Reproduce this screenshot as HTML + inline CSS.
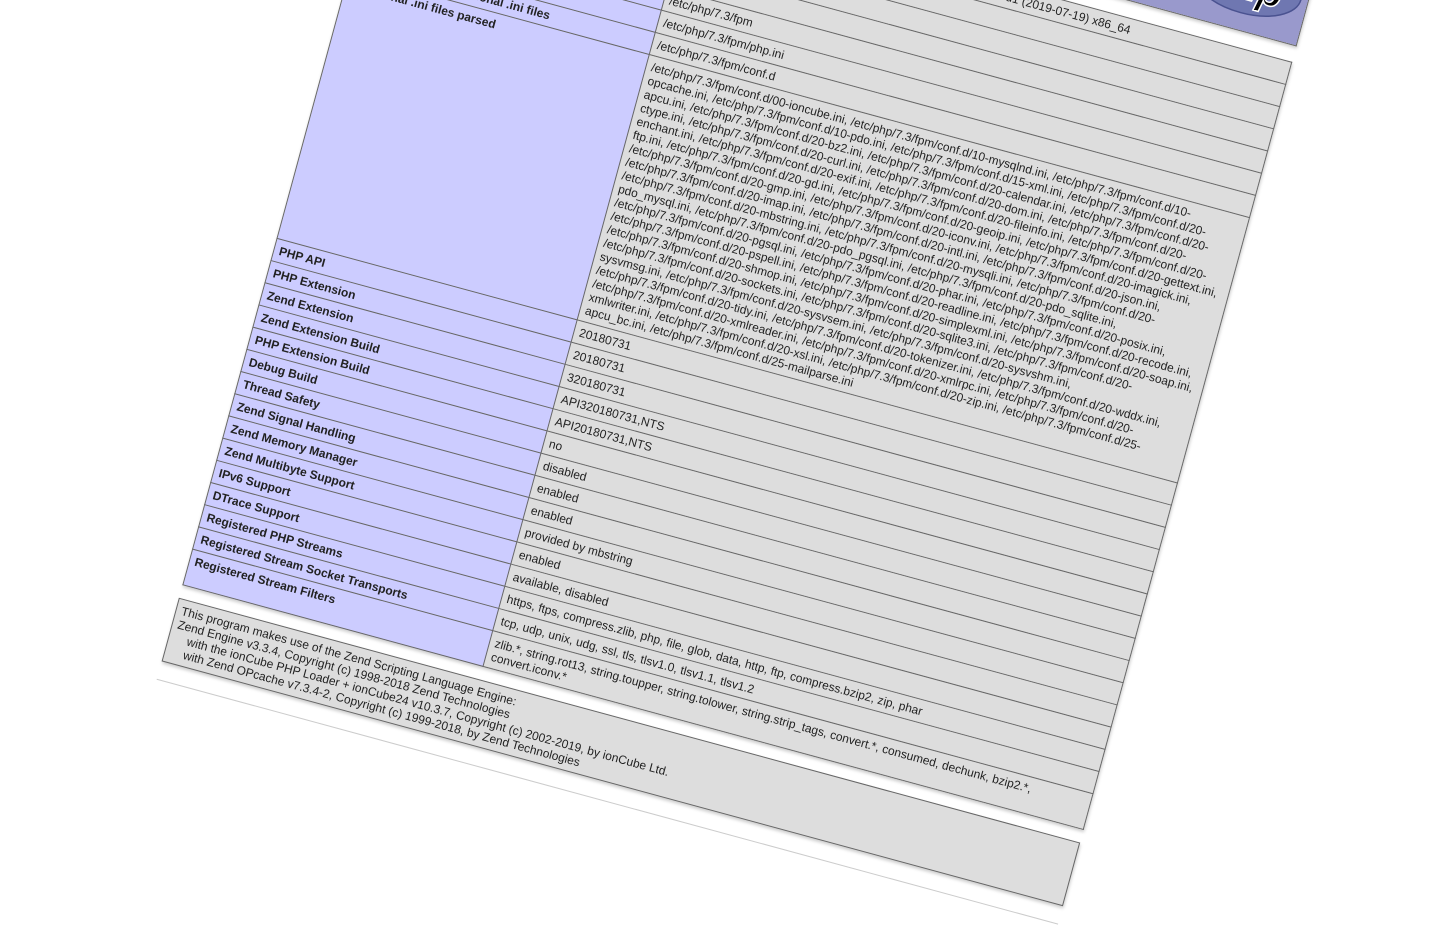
<!DOCTYPE html>
<html><head><meta charset="utf-8">
<style>
html,body{margin:0;padding:0;background:#fff;width:1446px;height:723px;overflow:hidden;}
body{font-family:"Liberation Sans",Arial,sans-serif;color:#222;}
.wrap{position:absolute;left:391px;top:-183px;width:934px;height:10px;transform-origin:0 0;transform:rotate(15.2deg);}
table{border-collapse:collapse;width:934px;table-layout:fixed;box-shadow:1px 2px 3px #ccc;position:absolute;left:0;}
td{font-size:12px;line-height:14px;border:1px solid #666;vertical-align:baseline;padding:4px 5px;}
td.e{background:#ccf;width:300px;font-weight:bold;color:#222;}
td.v{background:#ddd;color:#222;white-space:nowrap;overflow:hidden;}
.h{background:#99c;}
.hr{position:absolute;left:0;top:893px;width:934px;height:1px;background:#ccc;}
.foot{position:absolute;left:0;top:809px;width:922px;height:56px;padding:4px 5px;border:1px solid #666;background:#ddd;font-size:12px;line-height:14px;white-space:nowrap;overflow:hidden;box-shadow:1px 2px 3px #ccc;}
</style></head><body>
<div class="wrap">
  <table style="top:-101px;height:85px;">
    <tr><td class="h" style="height:75px;position:relative;padding:0;">
      <div style="position:absolute;left:10px;top:25px;font-size:18px;font-weight:bold;color:#000;">PHP Version 7.3.7-2</div>
      <svg width="120" height="70" style="position:absolute;left:808px;top:4px;" viewBox="0 0 120 70">
        <ellipse cx="62" cy="34" rx="55" ry="28" fill="#6f77b1" stroke="#4a5290" stroke-width="1.5"/>
        <text x="62" y="48" text-anchor="middle" font-family="Liberation Sans,sans-serif" font-weight="bold" font-style="italic" font-size="40" fill="#000" stroke="#fff" stroke-width="1.5">php</text>
      </svg>
    </td></tr>
  </table>
  <table style="top:0;">
    <colgroup><col style="width:311px"><col></colgroup>
    <tr><td class="e">System </td><td class="v">Linux web 4.19.0-5-amd64 #1 SMP Debian 4.19.37-5+deb10u1 (2019-07-19) x86_64 </td></tr>
    <tr><td class="e">Build Date </td><td class="v">Jul 25 2019 11:44:59 </td></tr>
    <tr><td class="e">Server API </td><td class="v">FPM/FastCGI </td></tr>
    <tr><td class="e">Virtual Directory Support </td><td class="v">disabled </td></tr>
    <tr><td class="e">Configuration File (php.ini) Path </td><td class="v">/etc/php/7.3/fpm </td></tr>
    <tr><td class="e">Loaded Configuration File </td><td class="v">/etc/php/7.3/fpm/php.ini </td></tr>
    <tr><td class="e">Scan this dir for additional .ini files </td><td class="v">/etc/php/7.3/fpm/conf.d </td></tr>
    <tr><td class="e">Additional .ini files parsed </td><td class="v">/etc/php/7.3/fpm/conf.d/00-ioncube.ini, /etc/php/7.3/fpm/conf.d/10-mysqlnd.ini, /etc/php/7.3/fpm/conf.d/10-<br>opcache.ini, /etc/php/7.3/fpm/conf.d/10-pdo.ini, /etc/php/7.3/fpm/conf.d/15-xml.ini, /etc/php/7.3/fpm/conf.d/20-<br>apcu.ini, /etc/php/7.3/fpm/conf.d/20-bz2.ini, /etc/php/7.3/fpm/conf.d/20-calendar.ini, /etc/php/7.3/fpm/conf.d/20-<br>ctype.ini, /etc/php/7.3/fpm/conf.d/20-curl.ini, /etc/php/7.3/fpm/conf.d/20-dom.ini, /etc/php/7.3/fpm/conf.d/20-<br>enchant.ini, /etc/php/7.3/fpm/conf.d/20-exif.ini, /etc/php/7.3/fpm/conf.d/20-fileinfo.ini, /etc/php/7.3/fpm/conf.d/20-<br>ftp.ini, /etc/php/7.3/fpm/conf.d/20-gd.ini, /etc/php/7.3/fpm/conf.d/20-geoip.ini, /etc/php/7.3/fpm/conf.d/20-gettext.ini,<br>/etc/php/7.3/fpm/conf.d/20-gmp.ini, /etc/php/7.3/fpm/conf.d/20-iconv.ini, /etc/php/7.3/fpm/conf.d/20-imagick.ini,<br>/etc/php/7.3/fpm/conf.d/20-imap.ini, /etc/php/7.3/fpm/conf.d/20-intl.ini, /etc/php/7.3/fpm/conf.d/20-json.ini,<br>/etc/php/7.3/fpm/conf.d/20-mbstring.ini, /etc/php/7.3/fpm/conf.d/20-mysqli.ini, /etc/php/7.3/fpm/conf.d/20-<br>pdo_mysql.ini, /etc/php/7.3/fpm/conf.d/20-pdo_pgsql.ini, /etc/php/7.3/fpm/conf.d/20-pdo_sqlite.ini,<br>/etc/php/7.3/fpm/conf.d/20-pgsql.ini, /etc/php/7.3/fpm/conf.d/20-phar.ini, /etc/php/7.3/fpm/conf.d/20-posix.ini,<br>/etc/php/7.3/fpm/conf.d/20-pspell.ini, /etc/php/7.3/fpm/conf.d/20-readline.ini, /etc/php/7.3/fpm/conf.d/20-recode.ini,<br>/etc/php/7.3/fpm/conf.d/20-shmop.ini, /etc/php/7.3/fpm/conf.d/20-simplexml.ini, /etc/php/7.3/fpm/conf.d/20-soap.ini,<br>/etc/php/7.3/fpm/conf.d/20-sockets.ini, /etc/php/7.3/fpm/conf.d/20-sqlite3.ini, /etc/php/7.3/fpm/conf.d/20-<br>sysvmsg.ini, /etc/php/7.3/fpm/conf.d/20-sysvsem.ini, /etc/php/7.3/fpm/conf.d/20-sysvshm.ini,<br>/etc/php/7.3/fpm/conf.d/20-tidy.ini, /etc/php/7.3/fpm/conf.d/20-tokenizer.ini, /etc/php/7.3/fpm/conf.d/20-wddx.ini,<br>/etc/php/7.3/fpm/conf.d/20-xmlreader.ini, /etc/php/7.3/fpm/conf.d/20-xmlrpc.ini, /etc/php/7.3/fpm/conf.d/20-<br>xmlwriter.ini, /etc/php/7.3/fpm/conf.d/20-xsl.ini, /etc/php/7.3/fpm/conf.d/20-zip.ini, /etc/php/7.3/fpm/conf.d/25-<br>apcu_bc.ini, /etc/php/7.3/fpm/conf.d/25-mailparse.ini </td></tr>
    <tr><td class="e">PHP API </td><td class="v">20180731 </td></tr>
    <tr><td class="e">PHP Extension </td><td class="v">20180731 </td></tr>
    <tr><td class="e">Zend Extension </td><td class="v">320180731 </td></tr>
    <tr><td class="e">Zend Extension Build </td><td class="v">API320180731,NTS </td></tr>
    <tr><td class="e">PHP Extension Build </td><td class="v">API20180731,NTS </td></tr>
    <tr><td class="e">Debug Build </td><td class="v">no </td></tr>
    <tr><td class="e">Thread Safety </td><td class="v">disabled </td></tr>
    <tr><td class="e">Zend Signal Handling </td><td class="v">enabled </td></tr>
    <tr><td class="e">Zend Memory Manager </td><td class="v">enabled </td></tr>
    <tr><td class="e">Zend Multibyte Support </td><td class="v">provided by mbstring </td></tr>
    <tr><td class="e">IPv6 Support </td><td class="v">enabled </td></tr>
    <tr><td class="e">DTrace Support </td><td class="v">available, disabled </td></tr>
    <tr><td class="e">Registered PHP Streams </td><td class="v">https, ftps, compress.zlib, php, file, glob, data, http, ftp, compress.bzip2, zip, phar </td></tr>
    <tr><td class="e">Registered Stream Socket Transports </td><td class="v">tcp, udp, unix, udg, ssl, tls, tlsv1.0, tlsv1.1, tlsv1.2 </td></tr>
    <tr><td class="e">Registered Stream Filters </td><td class="v">zlib.*, string.rot13, string.toupper, string.tolower, string.strip_tags, convert.*, consumed, dechunk, bzip2.*,<br>convert.iconv.* </td></tr>
  </table>
  <div class="foot">This program makes use of the Zend Scripting Language Engine:<br>Zend Engine v3.3.4, Copyright (c) 1998-2018 Zend Technologies<br>&nbsp;&nbsp;&nbsp;&nbsp;with the ionCube PHP Loader + ionCube24 v10.3.7, Copyright (c) 2002-2019, by ionCube Ltd.<br>&nbsp;&nbsp;&nbsp;&nbsp;with Zend OPcache v7.3.4-2, Copyright (c) 1999-2018, by Zend Technologies</div>
  <div class="hr"></div>
</div>
</body></html>
